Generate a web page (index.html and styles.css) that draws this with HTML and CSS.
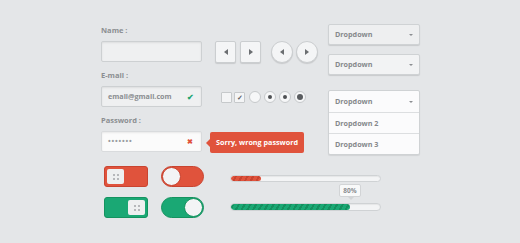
FILE: index.html
```html
<!DOCTYPE html>
<html lang="en">
<head>
  <meta charset="UTF-8" />
  <title>UI Kit</title>
  <link rel="stylesheet" href="styles.css">
</head>
<body>
  <div class="kit">
    <div class="top">
      <!-- Form fields -->
      <div class="col-form">
        <div class="label">Name :</div>
        <div class="field"></div>
        <div class="label">E-mail :</div>
        <div class="field filled">email@gmail.com <span class="ok">&#10004;</span></div>
        <div class="label">Password :</div>
        <div class="field pass">&bull;&bull;&bull;&bull;&bull;&bull;&bull; <span class="bad">&#10006;</span></div>
      </div>

      <!-- Buttons, checks, tooltip -->
      <div class="col-mid">
        <div class="arrows">
          <div class="sq-btn"><span class="tri left"></span></div>
          <div class="sq-btn"><span class="tri right"></span></div>
          <div class="rd-btn first"><span class="tri left"></span></div>
          <div class="rd-btn"><span class="tri right"></span></div>
        </div>
        <div class="checks">
          <span class="box"></span>
          <span class="box"><span class="tick">&#10003;</span></span>
          <span class="radio"></span>
          <span class="radio"><span class="dot"></span></span>
          <span class="radio"><span class="dot"></span></span>
          <span class="radio"><span class="dot big"></span></span>
        </div>
        <div class="error-tip">Sorry, wrong password</div>
      </div>

      <!-- Dropdowns -->
      <div class="col-drop">
        <div class="drop">Dropdown <span class="caret"></span></div>
        <div class="drop">Dropdown <span class="caret"></span></div>
        <div class="drop-open">
          <div class="opt">Dropdown <span class="caret"></span></div>
          <div class="opt">Dropdown 2</div>
          <div class="opt">Dropdown 3</div>
        </div>
      </div>
    </div>

    <div class="bottom">
      <div class="toggles">
        <div class="sw-sq red"><span class="knob"><i></i><i></i><i></i><i></i></span></div>
        <div class="sw-rd red"><span class="ball"></span></div>
        <div class="sw-sq green on"><span class="knob"><i></i><i></i><i></i><i></i></span></div>
        <div class="sw-rd green on"><span class="ball"></span></div>
      </div>
      <div class="bars">
        <div class="bar"><div class="fill red" style="width: 20%"></div></div>
        <div class="bar-wrap">
          <div class="pct">80%</div>
          <div class="bar"><div class="fill green" style="width: 80%"></div></div>
        </div>
      </div>
    </div>
  </div>
</body>
</html>
```

FILE: styles.css
```css
body { margin: 0; background: #e4e6e8; font-family: "Open Sans", Arial, sans-serif; font-weight: 700; color: #8b8e91; }
.kit { padding: 24px 0 0 101px; width: 330px; }
.top { display: flex; }

/* form column */
.col-form { width: 101px; }
.label { font-size: 7.5px; height: 12px; line-height: 12px; margin-bottom: 5px; }
.field { box-sizing: border-box; width: 101px; height: 21px; margin-bottom: 7px; border: 1px solid #cdd0d2; border-radius: 2px; background: #eff0f1; box-shadow: inset 0 1px 2px rgba(0,0,0,0.08); font-size: 7.2px; line-height: 19px; padding: 0 6px; display: flex; justify-content: space-between; color: #8a8d90; }
.field.pass { background: #fbfbfb; border-color: #d9dbdd; letter-spacing: 0.8px; color: #9a9da0; }
.ok { color: #20a56f; font-size: 8px; padding-right: 1px; }
.bad { color: #e0533c; font-size: 7px; padding-right: 1px; }

/* middle column */
.col-mid { width: 124px; padding-left: 2px; }
.arrows { display: flex; margin: 17px 0 0 11px; }
.sq-btn, .rd-btn { box-sizing: border-box; width: 21px; height: 22px; margin-right: 4px; border: 1px solid #cbced0; background: #f4f5f6; box-shadow: 0 1px 1px rgba(0,0,0,0.12); display: flex; align-items: center; justify-content: center; }
.sq-btn { border-radius: 2px; }
.rd-btn { width: 22px; border-radius: 50%; margin-right: 3px; }
.rd-btn.first { margin-left: 6px; }
.tri { width: 0; height: 0; border-top: 3px solid transparent; border-bottom: 3px solid transparent; }
.tri.left { border-right: 4px solid #6b6e71; }
.tri.right { border-left: 4px solid #6b6e71; }

.checks { display: flex; align-items: center; margin: 28px 0 0 17px; height: 12px; }
.box { box-sizing: border-box; width: 11px; height: 11px; margin-right: 2px; border: 1px solid #c6c9cb; border-radius: 1px; background: #f4f5f6; font-size: 7px; line-height: 9px; text-align: center; color: #5e6164; }
.radio { box-sizing: border-box; width: 12px; height: 12px; margin-left: 2px; margin-right: 1px; border: 1px solid #c6c9cb; border-radius: 50%; background: #f6f7f8; display: flex; align-items: center; justify-content: center; }
.dot { width: 4px; height: 4px; border-radius: 50%; background: #4e5154; }
.dot.big { width: 6px; height: 6px; background: #5a5d60; }

.error-tip { position: relative; margin: 29px 0 0 6px; width: 94px; height: 21px; box-sizing: border-box; background: #e0533c; border-radius: 2px; color: #fff; font-size: 7.2px; line-height: 21px; text-align: center; }
.error-tip::before { content: ""; position: absolute; left: -4px; top: 7px; border-top: 4px solid transparent; border-bottom: 4px solid transparent; border-right: 4px solid #e0533c; }

/* dropdown column */
.col-drop { width: 92px; }
.drop, .opt { box-sizing: border-box; height: 21px; padding: 0 6px; font-size: 7.2px; line-height: 21px; display: flex; justify-content: space-between; align-items: center; color: #85888b; }
.drop { border: 1px solid #cfd2d4; border-radius: 2px; background: #f2f3f4; box-shadow: 0 1px 1px rgba(0,0,0,0.12); margin-bottom: 9px; }
.drop:first-child { background: #eeeff0; }
.drop-open { margin-top: 15px; border: 1px solid #cfd2d4; border-radius: 2px; background: #fbfbfc; box-shadow: 0 1px 1px rgba(0,0,0,0.08); }
.opt { height: 21px; border-top: 1px solid #dcdee0; }
.opt:first-child { border-top: none; }
.caret { width: 0; height: 0; border-left: 2px solid transparent; border-right: 2px solid transparent; border-top: 2px solid #8b8e91; }

/* bottom */
.bottom { display: flex; margin-top: 7px; margin-left: 3px; }
.toggles { display: grid; grid-template-columns: 44px 43px; column-gap: 13px; row-gap: 10px; width: 126px; }
.sw-sq { box-sizing: border-box; height: 21px; border-radius: 3px; padding: 2px; display: flex; }
.sw-rd { box-sizing: border-box; height: 21px; border-radius: 11px; display: flex; align-items: center; }
.red { background: #e0533c; border: 1px solid #c94430; }
.green { background: #1aa874; border: 1px solid #14935f; }
.on { justify-content: flex-end; }
.knob { width: 17px; height: 15px; box-sizing: border-box; border-radius: 2px; background: #eef0f0; display: grid; grid-template-columns: 2px 2px; grid-template-rows: 2px 2px; gap: 2px; align-content: center; justify-content: center; }
.knob i { background: #a3a6a8; border-radius: 1px; }
.ball { width: 19px; height: 19px; box-sizing: border-box; border-radius: 50%; background: #f3f4f5; }
.sw-rd.red .ball { border: 1px solid #c94430; }
.sw-rd.green .ball { border: 1px solid #14935f; }

.bars { width: 151px; padding-top: 9px; }
.bar { box-sizing: border-box; height: 7px; border: 1px solid #cfd2d4; border-radius: 4px; background: #f3f4f5; box-shadow: inset 0 1px 1px rgba(0,0,0,0.06); overflow: hidden; }
.fill { height: 100%; border-radius: 3px; }
.fill.red { border: none; background: repeating-linear-gradient(-60deg, #e0533c 0 3px, #c9432f 3px 5px); }
.fill.green { border: none; background: repeating-linear-gradient(-60deg, #1aa874 0 3px, #14905f 3px 5px); }
.bar-wrap { position: relative; margin-top: 21px; }
.bar-wrap .bar { height: 8px; }
.pct { position: absolute; left: 109px; top: -19px; width: 22px; height: 13px; box-sizing: border-box; border: 1px solid #d2d4d6; border-radius: 2px; background: #f8f9f9; font-size: 6.5px; line-height: 11px; text-align: center; color: #8b8e91; }
.pct::after { content: ""; position: absolute; left: 8px; bottom: -4px; border-left: 3px solid transparent; border-right: 3px solid transparent; border-top: 3px solid #d2d4d6; }
```
